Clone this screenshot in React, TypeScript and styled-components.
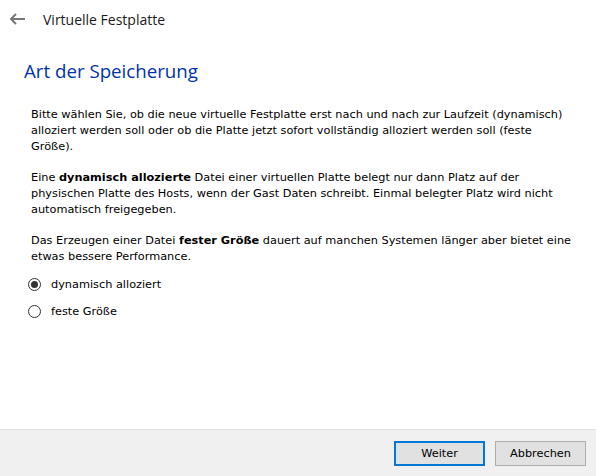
import styled, { createGlobalStyle } from "styled-components";

const GlobalStyle = createGlobalStyle`
  html, body {
    margin: 0;
    padding: 0;
    background: #ffffff;
  }
  #root {
    height: 476px;
  }
`;

const Window = styled.div`
  width: 596px;
  height: 476px;
  display: flex;
  flex-direction: column;
  background: #fff;
  font-family: "DejaVu Sans", Verdana, sans-serif;
  color: #000;
`;

const Header = styled.div`
  display: flex;
  align-items: center;
  height: 38px;
  padding-left: 8px;
  gap: 17px;
`;

const BackButton = styled.button`
  border: 0;
  background: none;
  padding: 0;
  width: 18px;
  height: 18px;
  display: flex;
  align-items: center;
  justify-content: center;
  cursor: pointer;
`;

const HeaderTitle = styled.span`
  font-family: "Open Sans", "Noto Sans", sans-serif;
  font-size: 14px;
  color: #1a1a1a;
`;

const Content = styled.div`
  flex: 1;
  padding: 21px 22px 0 24px;
`;

const Heading = styled.h1`
  margin: 0 0 24px 0;
  font-family: "Open Sans", "Noto Sans", sans-serif;
  font-weight: 400;
  font-size: 18.7px;
  line-height: 24px;
  color: #0033a8;
`;

const Body = styled.div`
  padding-left: 7px;
  font-size: 11.3px;
  line-height: 16px;
`;

const Paragraph = styled.p`
  margin: 0 0 15px 0;
  &:last-of-type {
    margin-bottom: 11px;
  }
`;

const RadioList = styled.div`
  display: flex;
  flex-direction: column;
  gap: 10px;
  margin-left: -3px;
`;

const RadioRow = styled.label`
  display: flex;
  align-items: center;
  gap: 10px;
  font-size: 11.3px;
  height: 17px;
`;

const RadioCircle = styled.span<{ $checked?: boolean }>`
  width: 13px;
  height: 13px;
  box-sizing: border-box;
  border: 1px solid #333;
  border-radius: 50%;
  display: flex;
  align-items: center;
  justify-content: center;

  &::after {
    content: "";
    width: 7px;
    height: 7px;
    border-radius: 50%;
    background: ${({ $checked }) => ($checked ? "#333" : "transparent")};
  }
`;

const Footer = styled.div`
  height: 47px;
  box-sizing: border-box;
  border-top: 1px solid #dfdfdf;
  background: #f0f0f0;
  display: flex;
  align-items: center;
  justify-content: flex-end;
  gap: 10px;
  padding: 0 10px 0 0;
`;

const Button = styled.button<{ $primary?: boolean }>`
  width: 91px;
  height: 25px;
  box-sizing: border-box;
  background: #e1e1e1;
  border: ${({ $primary }) => ($primary ? "2px solid #0078d7" : "1px solid #adadad")};
  font-family: "DejaVu Sans", Verdana, sans-serif;
  font-size: 11.3px;
  color: #000;
  padding: 0;
  margin-top: 1px;
`;

export default function App() {
  return (
    <>
      <GlobalStyle />
      <Window>
        <Header>
          <BackButton aria-label="Zurück">
            <svg width="17" height="12" viewBox="0 0 17 12">
              <path
                d="M7 1 L2 6 L7 11 M2 6 H16"
                fill="none"
                stroke="#777"
                strokeWidth="2"
              />
            </svg>
          </BackButton>
          <HeaderTitle>Virtuelle Festplatte</HeaderTitle>
        </Header>
        <Content>
          <Heading>Art der Speicherung</Heading>
          <Body>
            <Paragraph>
              Bitte wählen Sie, ob die neue virtuelle Festplatte erst nach und
              nach zur Laufzeit (dynamisch) alloziert werden soll oder ob die
              Platte jetzt sofort vollständig alloziert werden soll (feste
              Größe).
            </Paragraph>
            <Paragraph>
              Eine <b>dynamisch allozierte</b> Datei einer virtuellen Platte
              belegt nur dann Platz auf der physischen Platte des Hosts, wenn
              der Gast Daten schreibt. Einmal belegter Platz wird nicht
              automatisch freigegeben.
            </Paragraph>
            <Paragraph>
              Das Erzeugen einer Datei <b>fester Größe</b> dauert auf manchen
              Systemen länger aber bietet eine etwas bessere Performance.
            </Paragraph>
            <RadioList>
              <RadioRow>
                <RadioCircle $checked />
                dynamisch alloziert
              </RadioRow>
              <RadioRow>
                <RadioCircle />
                feste Größe
              </RadioRow>
            </RadioList>
          </Body>
        </Content>
        <Footer>
          <Button $primary>Weiter</Button>
          <Button>Abbrechen</Button>
        </Footer>
      </Window>
    </>
  );
}
